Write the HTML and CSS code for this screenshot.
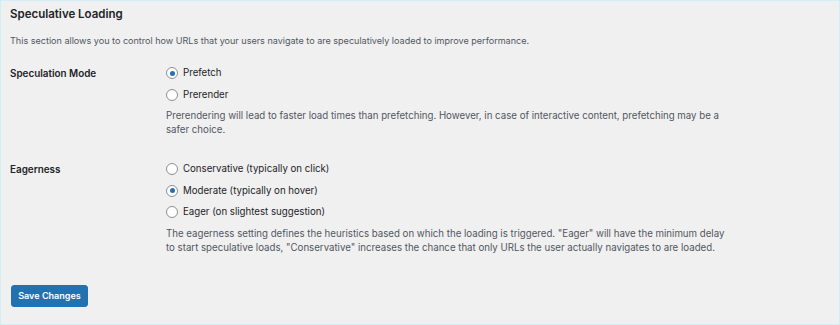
FILE: index.html
```html
<!DOCTYPE html>
<html>
<head>
<meta charset="utf-8">
<link rel="stylesheet" href="styles.css">
</head>
<body>
<div class="wrap">
  <h2 class="title">Speculative Loading</h2>
  <p class="intro">This section allows you to control how URLs that your users navigate to are speculatively loaded to improve performance.</p>
  <div class="row row-mode">
    <div class="label">Speculation Mode</div>
    <div class="field">
      <label class="opt"><span class="radio checked"></span>Prefetch</label>
      <label class="opt"><span class="radio"></span>Prerender</label>
      <p class="desc">Prerendering will lead to faster load times than prefetching. However, in case of interactive content, prefetching may be a safer choice.</p>
    </div>
  </div>
  <div class="row row-eager">
    <div class="label">Eagerness</div>
    <div class="field">
      <label class="opt"><span class="radio"></span>Conservative (typically on click)</label>
      <label class="opt"><span class="radio checked"></span>Moderate (typically on hover)</label>
      <label class="opt"><span class="radio"></span>Eager (on slightest suggestion)</label>
      <p class="desc">The eagerness setting defines the heuristics based on which the loading is triggered. "Eager" will have the minimum delay to start speculative loads, "Conservative" increases the chance that only URLs the user actually navigates to are loaded.</p>
    </div>
  </div>
  <div class="submit"><button class="btn">Save Changes</button></div>
</div>
</body>
</html>
```
FILE: styles.css
```css
html, body { margin: 0; padding: 0; }
body {
  width: 840px;
  height: 325px;
  background: #f0f0f1;
  font-family: Inter, "Liberation Sans", sans-serif;
  font-size: 9.68px;
  color: #1d2327;
}
.wrap {
  box-sizing: border-box;
  width: 840px;
  height: 325px;
  border: 1px solid #cdeff5;
  padding: 5px 9px 0 9px;
}
.title {
  margin: 0;
  font-size: 11.5px;
  font-weight: 600;
  line-height: 16px;
}
.intro {
  margin: 12px 0 0 0;
  font-size: 9.05px;
  line-height: 14px;
  color: #50575e;
}
.row {
  display: flex;
}
.row-mode { margin-top: 18px; }
.row-eager { margin-top: 25px; }
.label {
  width: 156px;
  flex: none;
  font-weight: 600;
  font-size: 9.9px;
  line-height: 14px;
}
.field { width: 560px; }
.opt {
  display: flex;
  align-items: center;
  height: 14px;
  margin-bottom: 7.5px;
  line-height: 14px;
}
.radio {
  box-sizing: border-box;
  width: 12px;
  height: 12px;
  border: 1px solid #8c8f94;
  border-radius: 50%;
  background: #fff;
  margin-right: 5px;
  position: relative;
  flex: none;
}
.radio.checked::after {
  content: "";
  position: absolute;
  left: 2.5px;
  top: 2.5px;
  width: 5px;
  height: 5px;
  border-radius: 50%;
  background: #2271b1;
}
.desc {
  margin: 0;
  line-height: 14px;
  color: #50575e;
}
.submit { margin-top: 30px; }
.btn {
  font-family: inherit;
  font-size: 9.05px;
  font-weight: 600;
  color: #fff;
  background: #2271b1;
  border: 1px solid #2271b1;
  border-radius: 3px;
  width: 77px;
  height: 22px;
  padding: 0;
  margin-left: 1px;
}
```
